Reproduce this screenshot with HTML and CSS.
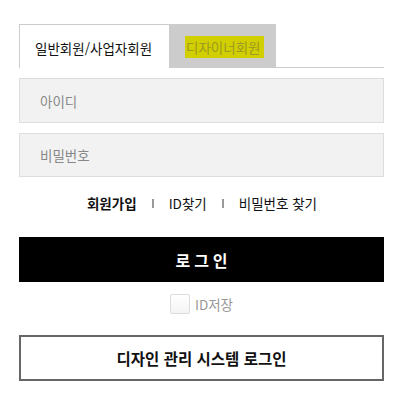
FILE: index.html
```html
<!DOCTYPE html>
<html lang="ko">
<head>
<meta charset="utf-8">
<link rel="stylesheet" href="styles.css">
</head>
<body>
<div class="login">
  <div class="tabs">
    <div class="tab tab-active">일반회원/사업자회원</div>
    <div class="tab tab-off"><span class="hl">디자이너회원</span></div>
    <div class="tab-fill"></div>
  </div>
  <div class="field">아이디</div>
  <div class="field field-gap">비밀번호</div>
  <div class="links">
    <span class="link link-strong">회원가입</span>
    <span class="sep"></span>
    <span class="link">ID찾기</span>
    <span class="sep"></span>
    <span class="link">비밀번호 찾기</span>
  </div>
  <div class="btn-login">로그인</div>
  <div class="save">
    <span class="check"></span>
    <span class="save-label">ID저장</span>
  </div>
  <div class="btn-design">디자인 관리 시스템 로그인</div>
</div>
</body>
</html>
```
FILE: styles.css
```css
* { box-sizing: border-box; }
body {
  margin: 0;
  background: #fff;
  font-family: "Noto Sans CJK KR", "Noto Sans", sans-serif;
  color: #111;
}
.login {
  width: 365px;
  margin-left: 19px;
  padding-top: 24px;
}
.tabs {
  display: flex;
  height: 44px;
}
.tab {
  display: flex;
  align-items: center;
  font-size: 13.5px;
  line-height: 20px;
}
.tab-active {
  width: 150px;
  border-left: 1px solid #ccc;
  border-top: 1px solid #ccc;
  padding-left: 15px;
  padding-top: 3px;
  color: #111;
}
.tab-off {
  width: 107px;
  background: #ccc;
  padding-left: 16px;
  padding-top: 2px;
}
.hl {
  background: #d2cf00;
  color: #9c9a20;
  padding: 1px 3px 1px 1px;
}
.tab-fill {
  flex: 1;
  border-bottom: 1px solid #ccc;
}
.field {
  margin-top: 10px;
  height: 45px;
  border: 1px solid #ddd;
  background: #f2f2f2;
  padding-left: 20px;
  display: flex;
  align-items: center;
  font-size: 13.5px;
  color: #888;
}
.field-gap { height: 44px; }
.links {
  margin-top: 16px;
  display: flex;
  justify-content: center;
  align-items: center;
  height: 20px;
  font-size: 13.5px;
  line-height: 20px;
  gap: 15px;
  padding-left: 1px;
}
.link { color: #111; }
.link-strong { font-weight: 700; }
.sep {
  width: 2px;
  height: 9px;
  background: #999;
}
.btn-login {
  margin-top: 24px;
  height: 45px;
  background: #000;
  color: #fff;
  font-size: 16px;
  font-weight: 700;
  letter-spacing: 4px;
  padding-left: 4px;
  display: flex;
  align-items: center;
  justify-content: center;
}
.save {
  margin-top: 12px;
  display: flex;
  justify-content: center;
  align-items: center;
  gap: 5px;
  height: 20px;
}
.check {
  width: 20px;
  height: 20px;
  border: 1px solid #ddd;
  background: linear-gradient(#fff, #f4f4f4);
  border-radius: 2px;
}
.save-label {
  font-size: 13.5px;
  color: #999;
  line-height: 20px;
}
.btn-design {
  margin-top: 21px;
  height: 46px;
  border: 2px solid #666;
  display: flex;
  align-items: center;
  justify-content: center;
  font-size: 15.5px;
  font-weight: 700;
  color: #111;
}
```
